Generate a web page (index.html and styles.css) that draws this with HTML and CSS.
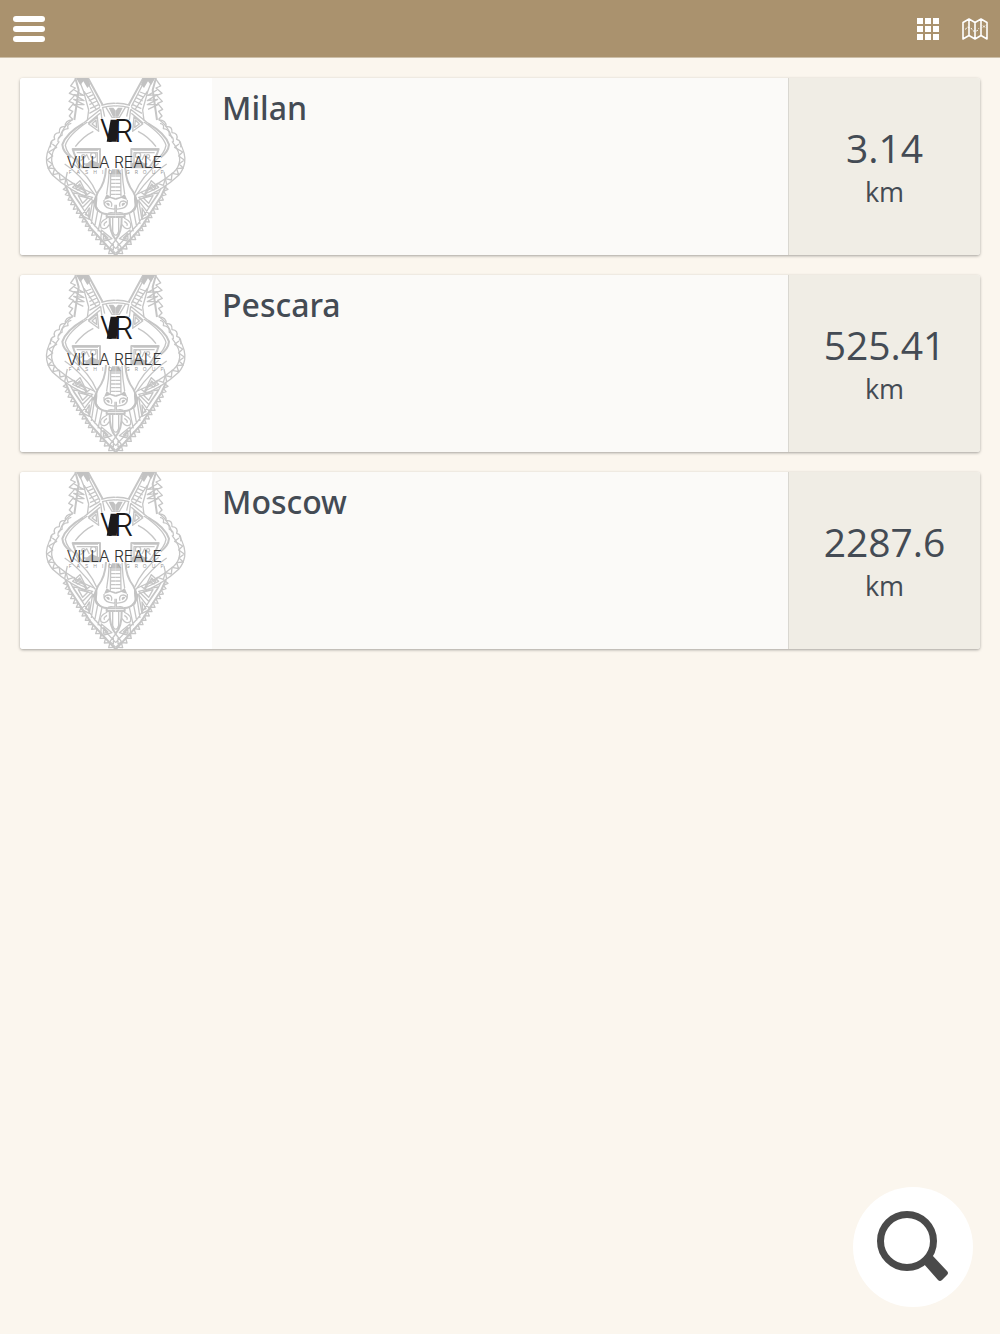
FILE: index.html
```html
<!DOCTYPE html>
<html lang="en">
<head>
<meta charset="UTF-8">
<meta name="viewport" content="width=device-width, initial-scale=1.0">
<title>Stores</title>
<link rel="stylesheet" href="styles.css">
</head>
<body>

<!-- shared drawings -->
<svg class="defs" aria-hidden="true">
    <defs>
        <g id="wolf-half">
            <!-- ear -->
            <path class="thick" d="M198 24L208 60L195 150M236 24L280 105"/>
            <path d="M228 24L272 110M207 24L222 62M222 62L238 120L234 152M224 64L262 120M195 60L222 76L194 74L224 92L193 88L224 104L192 104L222 118"/>
            <path d="M230 72L246 66M234 82L252 74M238 93L258 83M240 104L263 93M242 116L268 104M240 130L272 112"/>
            <path d="M198 28L184 48L198 54L180 70L196 76L179 94L193 100L178 118L190 124L180 138L190 148"/>
            <path class="fill" d="M200 24H236L243 44L234 54L222 34L213 46Z"/>
            <!-- forehead -->
            <path d="M276 106Q298 99 319 100M278 113Q300 107 319 108M280 113L286 140M290 112L308 142L319 142M274 118L222 160M272 130L236 160M274 118L278 150M264 140L238 162L268 184Z"/>
            <path d="M260 150L248 162L262 172Z"/>
            <path class="fill" d="M298 113H312L319 122V140H311Z"/>
            <!-- fur round the cheek -->
            <path class="thick" d="M222 160Q170 190 159 224Q161 246 184 262"/>
            <path d="M190 148Q160 170 150 205M234 156Q176 196 168 226Q172 250 198 270M252 184Q220 200 198 230"/>
            <path d="M190 150Q166 150 168 170Q148 168 150 188Q130 190 136 208Q120 212 124 232M186 160Q172 162 176 176Q156 178 158 196Q144 200 146 216"/>
            <path d="M128 216Q108 250 112 278Q116 300 130 316Q175 360 262 396M150 214Q124 246 127 272Q130 294 144 306Q190 345 254 372"/>
            <path d="M129 222L142 232L118 246L130 258L113 270L129 282L116 294L136 296L130 314L150 310L152 330L170 326L176 346L194 340L204 360L220 354L230 376L244 366"/>
            <!-- eye -->
            <path class="thick" d="M190 237H272V292H218Q198 266 190 237Z"/>
            <path d="M202 248H264V282H224M214 272L232 254L240 270"/>
            <circle cx="252" cy="256" r="8"/>
            <circle cx="222" cy="259" r="5"/>
            <path class="fill" d="M228 284L246 270L270 280V292H228ZM190 237H266V242H194Z"/>
            <path d="M198 270L212 298M174 306L166 344M166 282Q210 310 258 376M190 280Q240 318 262 370M212 332L190 352L232 372Z"/>
            <path d="M211 342L202 351L221 360Z"/>
            <!-- muzzle -->
            <path class="thick" d="M290 294Q288 338 266 366Q248 398 264 418Q278 433 294 432"/>
            <path d="M300 296Q298 338 292 372M304 310L303 380M304 318H319M303 329H319M303 340H319M303 351H319M303 362H319M303 373H319"/>
            <path class="fill" d="M319 298H308L304 314H319ZM264 370L250 395L260 421L278 431L262 410L264 388ZM292 372L284 390L302 384L319 390V384L303 380Z"/>
            <path d="M284 390Q282 412 300 415L319 418M286 400Q290 390 302 394Q310 400 306 410M317 404V430M296 430L319 424"/>
            <path class="fill" d="M290 400Q296 396 301 402L300 409Q293 408 290 400Z"/>
            <!-- tongue -->
            <path class="thick" d="M319 433H292V441H319M301 442Q300 488 319 509"/>
            <path d="M310 444V484Q312 494 319 496M294 444Q268 456 275 473Q288 482 300 464M293 454Q280 462 286 467"/>
            <!-- jaw -->
            <path class="thick" d="M168 346L182 378L244 474L319 556"/>
            <path d="M182 354L194 376L252 462L319 536M256 395L246 462M266 418L256 470M278 430L266 484M190 368L250 382L220 412ZM207 377L236 384L220 400ZM250 392L216 436L240 448ZM240 414L228 434L238 438ZM276 480L308 506L274 516ZM283 491L296 504L282 508ZM319 510L302 532L319 550M312 522V540"/>
            <path d="M170 352L162 358L176 364L168 374L182 378L176 390L190 392L184 404L198 404L192 418L207 416L201 430L216 429L210 443L224 442L218 456L233 455L228 469L242 468L237 482L252 482L247 496L264 494L259 509L276 508L272 523L289 522L285 537L302 536L298 551L314 550"/>
        </g>
        <symbol id="villa-reale" viewBox="32 24 576 531">
            <rect x="32" y="24" width="576" height="531" fill="#fff"/>
            <g class="wolf">
                <use href="#wolf-half"/>
                <use href="#wolf-half" transform="matrix(-1 0 0 1 638 0)"/>
            </g>
            <path class="ink" d="M304 149H328L322 215H292Z"/>
            <text class="initials" x="271" y="215">V</text>
            <text class="initials" x="313" y="215">R</text>
            <text class="brand" x="172" y="293">VILLA REALE</text>
            <text class="group" x="178" y="311">F&emsp;A&emsp;S&emsp;H&emsp;I&emsp;O&emsp;N&emsp;G&emsp;R&emsp;O&emsp;U&emsp;P</text>
        </symbol>
    </defs>
</svg>

<header class="topbar">
    <button class="icon-btn" type="button" aria-label="Menu">
        <svg width="32" height="26" viewBox="0 0 32 26" fill="#fff">
            <rect width="32" height="6" rx="3"/>
            <rect y="10" width="32" height="6" rx="3"/>
            <rect y="20" width="32" height="6" rx="3"/>
        </svg>
    </button>
    <nav class="views">
        <button class="icon-btn" type="button" aria-label="Grid view">
            <svg width="22" height="22" viewBox="0 0 22 22" fill="#fff">
                <path d="M0 0h6v6H0zM8 0h6v6H8zM16 0h6v6h-6zM0 8h6v6H0zM8 8h6v6H8zM16 8h6v6h-6zM0 16h6v6H0zM8 16h6v6H8zM16 16h6v6h-6z"/>
            </svg>
        </button>
        <button class="icon-btn" type="button" aria-label="Map view">
            <svg width="26" height="22" viewBox="0 0 26 22" fill="none" stroke="#fff" stroke-width="1.6" stroke-linejoin="round">
                <path d="M1 4.500L7 1l6 3.500L19 1l6 3.500V21l-6-3.500L13 21l-6-3.500L1 21zM7 1v16.500M13 4.500V21M19 1v16.500"/>
                <path stroke-width="1" stroke-dasharray="2 1.500" d="M3.500 11.500L5 9l4 1 2 3h4l2-3"/>
                <path stroke-width="1" d="M21 7.500l2 2M23 7.500l-2 2"/>
            </svg>
        </button>
    </nav>
</header>

<main>
    <ul class="stores">
        <li>
            <a class="store" href="#milan">
                <svg class="thumb" viewBox="0 0 576 531" role="img" aria-label="Villa Reale"><use href="#villa-reale"/></svg>
                <h2 class="city">Milan</h2>
                <p class="distance"><span class="value">3.14</span><span class="unit">km</span></p>
            </a>
        </li>
        <li>
            <a class="store" href="#pescara">
                <svg class="thumb" viewBox="0 0 576 531" role="img" aria-label="Villa Reale"><use href="#villa-reale"/></svg>
                <h2 class="city">Pescara</h2>
                <p class="distance"><span class="value">525.41</span><span class="unit">km</span></p>
            </a>
        </li>
        <li>
            <a class="store" href="#moscow">
                <svg class="thumb" viewBox="0 0 576 531" role="img" aria-label="Villa Reale"><use href="#villa-reale"/></svg>
                <h2 class="city">Moscow</h2>
                <p class="distance"><span class="value">2287.6</span><span class="unit">km</span></p>
            </a>
        </li>
    </ul>
</main>

<button class="search" type="button" aria-label="Search">
    <svg viewBox="0 0 120 120">
        <circle cx="54" cy="54" r="26.500" fill="none" stroke="#4a4a4a" stroke-width="7"/>
        <path fill="#4a4a4a" d="M70 76L79 68L94 84Q96 86 94 88L89 93Q87 95 85 93Z"/>
    </svg>
</button>

</body>
</html>
```
FILE: styles.css
```css
* {
    box-sizing: border-box;
}
body {
    margin: 0;
    background-color: #fbf6ee;
    color: #444b54;
    font-family: "Open Sans", "Noto Sans", sans-serif;
}
.defs {
    position: absolute;
    width: 0;
    height: 0;
}
button {
    padding: 0;
    border: none;
    background: none;
    cursor: pointer;
}

/* top bar */
.topbar {
    display: flex;
    align-items: center;
    justify-content: space-between;
    height: 58px;
    padding: 0 12px 0 13px;
    background-color: #aa926e;
    border-bottom: 1px solid #cdbfa8;
}
.views {
    display: flex;
    gap: 23px;
}
.icon-btn svg {
    display: block;
}

/* store list */
.stores {
    display: flex;
    flex-direction: column;
    gap: 20px;
    margin: 0;
    padding: 20px;
    list-style: none;
}
.store {
    display: flex;
    overflow: hidden;
    border-radius: 3px;
    background-color: #fbfaf8;
    box-shadow: 0 1px 3px rgba(0, 0, 0, 0.35);
    color: inherit;
    text-decoration: none;
}
.thumb {
    display: block;
    width: 20%;
}
.city {
    flex: 1;
    margin: 0;
    padding: 8px 10px;
    font-family: "Noto Sans", "Open Sans", sans-serif;
    font-size: 32px;
    font-weight: 500;
    line-height: 44px;
}
.distance {
    display: flex;
    flex-direction: column;
    align-items: center;
    justify-content: center;
    width: 20%;
    margin: 0;
    padding-top: 2px;
    border-left: 1px solid #d9d7d1;
    background-color: #f0ede5;
}
.value {
    font-size: 39px;
    line-height: 48px;
}
.unit {
    font-size: 27px;
    line-height: 40px;
}

/* logo */
.wolf {
    fill: none;
    stroke: #c6c6c6;
    stroke-width: 4;
    stroke-linejoin: round;
}
.thick {
    stroke-width: 6;
}
.fill {
    fill: #c2c2c2;
    stroke: none;
}
.ink {
    fill: #1c1a1b;
}
.initials {
    fill: #1c1a1b;
    font-family: Inter, sans-serif;
    font-size: 92px;
    font-weight: 300;
}
.brand {
    fill: #333;
    font-family: Inter, sans-serif;
    font-size: 47px;
    font-weight: 300;
}
.group {
    fill: #999;
    font-family: Inter, sans-serif;
    font-size: 15px;
}

/* floating search button */
.search {
    position: fixed;
    right: 27px;
    bottom: 27px;
    width: 120px;
    height: 120px;
    border-radius: 50%;
    background-color: #fff;
}
.search svg {
    display: block;
}
```
